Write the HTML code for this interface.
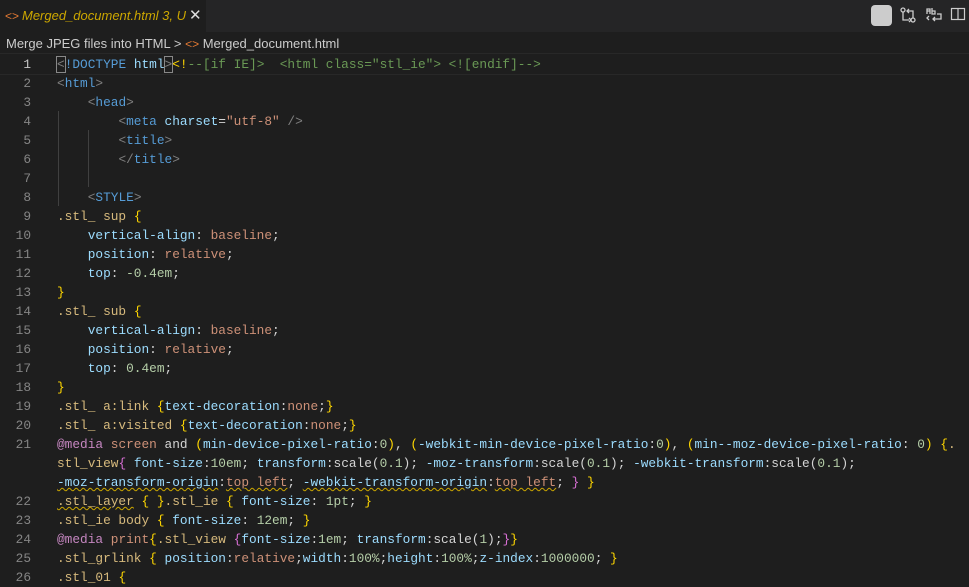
<!DOCTYPE html>
<html><head><style>
body{margin:0;width:969px;height:573px;background:#1e1e1e;overflow:hidden;font-family:"Liberation Sans",sans-serif;position:relative}
.tabbar{position:absolute;left:0;top:0;width:969px;height:32px;background:#252526}
.tab{position:absolute;left:0;top:0;width:206px;height:32px;background:#1e1e1e;color:#cca700;font-style:italic;font-size:13px;line-height:32px}
.bc{position:absolute;left:6px;top:35px;font-size:13px;color:#cccccc;line-height:18px}
.code{position:absolute;left:0;top:55px;font-family:"Liberation Mono",monospace;font-size:12.8px;white-space:pre;color:#d4d4d4}
.l{position:absolute;height:19px;line-height:19px;left:57px}
.n{position:absolute;width:31px;left:0;text-align:right;color:#858585;height:19px;line-height:19px}
.g{color:#808080}.t{color:#569cd6}.a{color:#9cdcfe}.s{color:#ce9178}.c{color:#6a9955}.sel{color:#d7ba7d}.num{color:#b5cea8}.m{color:#c586c0}.y{color:#ffd700}.p{color:#da70d6}.b{color:#179fff}.w{color:#d4d4d4}
.sq{text-decoration:underline wavy #cca700;text-decoration-thickness:1px}
.guide{position:absolute;width:1px;background:#404040}
</style></head><body>
<div class="tabbar"></div>
<div class="tab"><span style="color:#e37933;font-style:normal;position:absolute;left:5px;font-size:12px">&lt;&gt;</span><span style="position:absolute;left:22px">Merged_document.html 3, U</span><span style="position:absolute;left:189px;color:#ddd;font-style:normal;font-size:15px">✕</span></div>
<div style="position:absolute;left:871px;top:5px;width:21px;height:21px;background:#cccccc;border-radius:4px"></div>
<svg style="position:absolute;left:899px;top:6px" width="18" height="18" viewBox="0 0 18 18" fill="none" stroke="#ccc" stroke-width="1.3"><circle cx="4" cy="4" r="2"/><circle cx="14" cy="14" r="2"/><path d="M4 6v8h6M14 12V5H8M10 3 8 5l2 2M10 12l2 2-2 2"/></svg>
<svg style="position:absolute;left:925px;top:6px" width="18" height="18" viewBox="0 0 18 18" fill="none" stroke="#ccc" stroke-width="1.3"><path d="M2 8V3h3v5M2 5h3M7 2v6h3V5H7M12 8h4v5H8M10 11l-2 2 2 2M4 10l-2 2 2 2"/></svg>
<svg style="position:absolute;left:950px;top:6px" width="16" height="16" viewBox="0 0 16 16" fill="none" stroke="#ccc" stroke-width="1.2"><rect x="1.5" y="2.5" width="13" height="11"/><path d="M8 2.5v11"/></svg>
<div class="bc">Merge JPEG files into HTML <span style="color:#ccc">&gt;</span> <span style="color:#e37933;font-size:12px">&lt;&gt;</span> Merged_document.html</div>
<div style="position:absolute;left:0;top:53px;width:969px;height:20px;border-top:1px solid #282828;border-bottom:1px solid #282828"></div>
<div class="guide" style="left:58px;top:111px;height:95px"></div>
<div class="guide" style="left:88px;top:130px;height:57px"></div>
<div class="code">
<div class="n" style="top:0;color:#c6c6c6">1</div><div class="l" style="top:0"><span class="g" style="outline:1px solid #888">&lt;</span><span class="t">!DOCTYPE </span><span class="a">html</span><span class="g" style="outline:1px solid #888">&gt;</span><span class="y">&lt;!</span><span class="c">--[if IE]&gt;  &lt;html class="stl_ie"&gt; &lt;![endif]--&gt;</span></div>
<div class="n" style="top:19px">2</div><div class="l" style="top:19px"><span class="g">&lt;</span><span class="t">html</span><span class="g">&gt;</span></div>
<div class="n" style="top:38px">3</div><div class="l" style="top:38px">    <span class="g">&lt;</span><span class="t">head</span><span class="g">&gt;</span></div>
<div class="n" style="top:57px">4</div><div class="l" style="top:57px">        <span class="g">&lt;</span><span class="t">meta </span><span class="a">charset</span>=<span class="s">"utf-8"</span><span class="g"> /&gt;</span></div>
<div class="n" style="top:76px">5</div><div class="l" style="top:76px">        <span class="g">&lt;</span><span class="t">title</span><span class="g">&gt;</span></div>
<div class="n" style="top:95px">6</div><div class="l" style="top:95px">        <span class="g">&lt;/</span><span class="t">title</span><span class="g">&gt;</span></div>
<div class="n" style="top:114px">7</div>
<div class="n" style="top:133px">8</div><div class="l" style="top:133px">    <span class="g">&lt;</span><span class="t">STYLE</span><span class="g">&gt;</span></div>
<div class="n" style="top:152px">9</div><div class="l" style="top:152px"><span class="sel">.stl_ sup</span> <span class="y">{</span></div>
<div class="n" style="top:171px">10</div><div class="l" style="top:171px">    <span class="a">vertical-align</span>: <span class="s">baseline</span>;</div>
<div class="n" style="top:190px">11</div><div class="l" style="top:190px">    <span class="a">position</span>: <span class="s">relative</span>;</div>
<div class="n" style="top:209px">12</div><div class="l" style="top:209px">    <span class="a">top</span>: <span class="num">-0.4em</span>;</div>
<div class="n" style="top:228px">13</div><div class="l" style="top:228px"><span class="y">}</span></div>
<div class="n" style="top:247px">14</div><div class="l" style="top:247px"><span class="sel">.stl_ sub</span> <span class="y">{</span></div>
<div class="n" style="top:266px">15</div><div class="l" style="top:266px">    <span class="a">vertical-align</span>: <span class="s">baseline</span>;</div>
<div class="n" style="top:285px">16</div><div class="l" style="top:285px">    <span class="a">position</span>: <span class="s">relative</span>;</div>
<div class="n" style="top:304px">17</div><div class="l" style="top:304px">    <span class="a">top</span>: <span class="num">0.4em</span>;</div>
<div class="n" style="top:323px">18</div><div class="l" style="top:323px"><span class="y">}</span></div>
<div class="n" style="top:342px">19</div><div class="l" style="top:342px"><span class="sel">.stl_ a:link</span> <span class="y">{</span><span class="a">text-decoration</span>:<span class="s">none</span>;<span class="y">}</span></div>
<div class="n" style="top:361px">20</div><div class="l" style="top:361px"><span class="sel">.stl_ a:visited</span> <span class="y">{</span><span class="a">text-decoration</span>:<span class="s">none</span>;<span class="y">}</span></div>
<div class="n" style="top:380px">21</div><div class="l" style="top:380px"><span class="m">@media</span> <span class="s">screen</span> and <span class="y">(</span><span class="a">min-device-pixel-ratio</span>:<span class="num">0</span><span class="y">)</span>, <span class="y">(</span><span class="a">-webkit-min-device-pixel-ratio</span>:<span class="num">0</span><span class="y">)</span>, <span class="y">(</span><span class="a">min--moz-device-pixel-ratio</span>: <span class="num">0</span><span class="y">)</span> <span class="y">{</span><span class="sel">.</span></div>
<div class="l" style="top:399px"><span class="sel">stl_view</span><span class="p">{</span> <span class="a">font-size</span>:<span class="num">10em</span>; <span class="a">transform</span>:<span class="w">scale(</span><span class="num">0.1</span>); <span class="a">-moz-transform</span>:scale(<span class="num">0.1</span>); <span class="a">-webkit-transform</span>:scale(<span class="num">0.1</span>);</div>
<div class="l" style="top:418px"><span class="a sq">-moz-transform-origin</span>:<span class="s sq">top left</span>; <span class="a sq">-webkit-transform-origin</span>:<span class="s sq">top left</span>; <span class="p">}</span> <span class="y">}</span></div>
<div class="n" style="top:437px">22</div><div class="l" style="top:437px"><span class="sel sq">.stl_layer</span> <span class="y">{</span> <span class="y">}</span><span class="sel">.stl_ie</span> <span class="y">{</span> <span class="a">font-size</span>: <span class="num">1pt</span>; <span class="y">}</span></div>
<div class="n" style="top:456px">23</div><div class="l" style="top:456px"><span class="sel">.stl_ie body</span> <span class="y">{</span> <span class="a">font-size</span>: <span class="num">12em</span>; <span class="y">}</span></div>
<div class="n" style="top:475px">24</div><div class="l" style="top:475px"><span class="m">@media</span> <span class="s">print</span><span class="y">{</span><span class="sel">.stl_view</span> <span class="p">{</span><span class="a">font-size</span>:<span class="num">1em</span>; <span class="a">transform</span>:scale(<span class="num">1</span>);<span class="p">}</span><span class="y">}</span></div>
<div class="n" style="top:494px">25</div><div class="l" style="top:494px"><span class="sel">.stl_grlink</span> <span class="y">{</span> <span class="a">position</span>:<span class="s">relative</span>;<span class="a">width</span>:<span class="num">100%</span>;<span class="a">height</span>:<span class="num">100%</span>;<span class="a">z-index</span>:<span class="num">1000000</span>; <span class="y">}</span></div>
<div class="n" style="top:513px">26</div><div class="l" style="top:513px"><span class="sel">.stl_01</span> <span class="y">{</span></div>
</div>
</body></html>
